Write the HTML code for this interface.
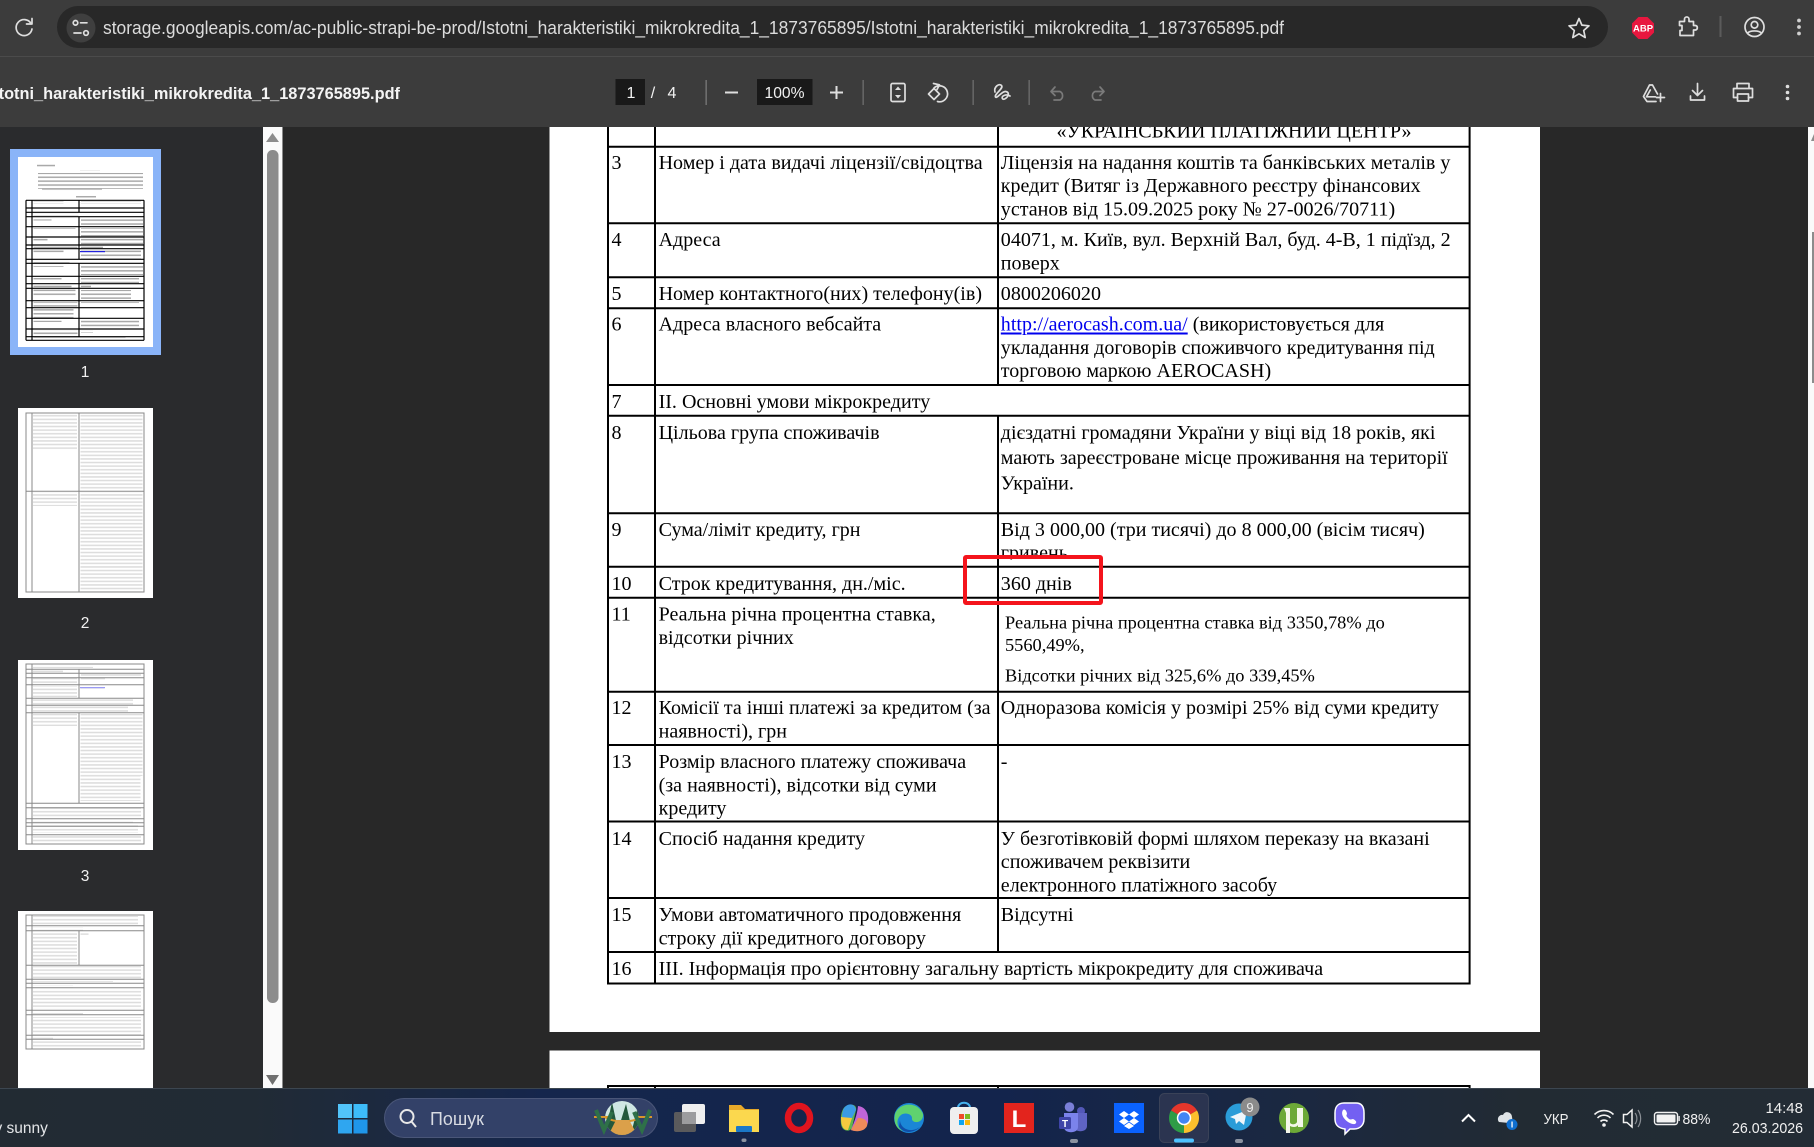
<!DOCTYPE html>
<html lang="uk"><head><meta charset="utf-8"><title>PDF</title>
<style>
html,body{margin:0;padding:0;background:#282828;overflow:hidden;width:1814px;height:1147px}
svg{display:block}
.t{font-family:"Liberation Serif","Noto Serif CJK SC",serif;font-size:20.05px;fill:#000}
.s{font-size:18.37px}
.u{font-family:"Liberation Sans","Noto Sans CJK SC",sans-serif}
.ic{fill:none;stroke:#dedede;stroke-width:1.7;stroke-linecap:round;stroke-linejoin:round}
.dim{stroke:#7a7a7a}
</style></head><body>
<svg xmlns="http://www.w3.org/2000/svg" width="1814" height="1147" viewBox="0 0 1814 1147">
<defs>
<pattern id="p1" width="10" height="3.9" patternUnits="userSpaceOnUse"><rect width="10" height="1.5" y="1" fill="#a8a8a8"/></pattern>
<pattern id="p2" width="10" height="3.6" patternUnits="userSpaceOnUse"><rect width="10" height="1.5" y="1" fill="#dcdcdc"/></pattern>
<linearGradient id="tb" x1="0" x2="1" y1="0" y2="0">
<stop offset="0" stop-color="#222b33"/><stop offset=".14" stop-color="#212b35"/><stop offset=".3" stop-color="#15264c"/><stop offset=".55" stop-color="#13244c"/><stop offset=".72" stop-color="#1b2840"/><stop offset=".84" stop-color="#222b33"/><stop offset="1" stop-color="#232c35"/></linearGradient>
<clipPath id="cp"><rect x="549" y="127" width="991" height="961"/></clipPath>
<clipPath id="cg"><rect x="990" y="540" width="300" height="19.5"/></clipPath>
<clipPath id="cl"><circle cx="622" cy="1118" r="17"/></clipPath>
</defs>

<!-- backgrounds -->
<rect width="1814" height="1147" fill="#282828"/>
<rect x="0" y="127" width="263" height="961" fill="#2a2b2d"/>

<!-- thumbnail scrollbar -->
<rect x="263" y="127" width="20" height="961" fill="#fafafa"/>
<rect x="282" y="127" width="1" height="961" fill="#8a8a8a"/>
<rect x="267" y="150" width="11.5" height="853" rx="5.5" fill="#8c8c8c"/>
<path d="M272.5 133 L279 142 H266 Z" fill="#8c8c8c"/>
<path d="M272.5 1085 L279 1075 H266 Z" fill="#707070"/>

<!-- thumbnails -->
<rect x="10" y="149" width="151" height="206" fill="#8ab4f8"/>
<rect x="18" y="157" width="135" height="190" fill="#fff"/>
<g fill="url(#p1)">
<rect x="37" y="164" width="18" height="3"/>
<rect x="80" y="170" width="20" height="2.6"/>
<rect x="38" y="173" width="105" height="16"/>
<rect x="42" y="187" width="60" height="5"/>
<rect x="76" y="195" width="20" height="2.6"/>
<rect x="33.500" y="201" width="30" height="3"/><rect x="81" y="201" width="60" height="3"/>
<rect x="33.500" y="213" width="45" height="2.800"/>
<rect x="33.500" y="217.500" width="18" height="3"/><rect x="81" y="217.500" width="62" height="9"/>
<rect x="33.500" y="228" width="42" height="3"/><rect x="81" y="228" width="62" height="9"/>
<rect x="33.500" y="238" width="14" height="3"/><rect x="81" y="238" width="62" height="7"/>
<rect x="33.500" y="245.500" width="44" height="3"/><rect x="81" y="245.500" width="22" height="3"/>
<rect x="33.500" y="250" width="30" height="3"/><rect x="81" y="250" width="60" height="9"/>
<rect x="33.500" y="260" width="36" height="3"/>
<rect x="33.500" y="264" width="30" height="3"/><rect x="81" y="264" width="62" height="11"/>
<rect x="33.500" y="278" width="28" height="3"/><rect x="81" y="278" width="58" height="5"/>
<rect x="33.500" y="285" width="38" height="3"/><rect x="81" y="285" width="10" height="3"/>
<rect x="33.500" y="289" width="42" height="7"/><rect x="81" y="290" width="50" height="9"/>
<rect x="33.500" y="302" width="44" height="5"/><rect x="81" y="302" width="58" height="3"/>
<rect x="33.500" y="309" width="40" height="9"/>
<rect x="33.500" y="319" width="28" height="3"/><rect x="81" y="319" width="58" height="9"/>
<rect x="33.500" y="330" width="44" height="6"/><rect x="81" y="330" width="12" height="3"/>
<rect x="33.500" y="337.400" width="92" height="2.600"/>
</g>
<rect x="80" y="251" width="25" height="1.200" fill="#2222dd"/>
<path d="M26 200.300V340.300M32 200.300V340.300M144 200.300V340.300M79 200.300V212.300M79 216.700V259.300M79 263.300V336.700M26 200.300H144M26 208H144M26 212.300H144M26 216.700H144M26 226.700H144M26 237H144M26 245H144M26 248.700H144M26 259.300H144M26 263.300H144M26 276.300H144M26 283.700H144M26 288.300H144M26 300.700H144M26 307.700H144M26 318.300H144M26 329H144M26 336.700H144M26 340.300H144" stroke="#000" stroke-width="1.200" fill="none"/>
<text x="85" y="377" text-anchor="middle" class="u" font-size="15.500" fill="#f2f2f2">1</text>

<rect x="18" y="408" width="135" height="190" fill="#fff"/>
<g fill="url(#p2)">
<rect x="33" y="414" width="44" height="36"/><rect x="80.500" y="414" width="62" height="76"/>
<rect x="33" y="492" width="44" height="14"/><rect x="80.500" y="492" width="62" height="100"/>
</g>
<path d="M26 413H144V592H26ZM32 413V592M79 413V592M26 491.300H144" stroke="#888" fill="none"/>
<text x="85" y="628" text-anchor="middle" class="u" font-size="15.500" fill="#f2f2f2">2</text>

<rect x="18" y="660" width="135" height="190" fill="#fff"/>
<g fill="url(#p2)">
<rect x="33" y="665" width="60" height="3"/><rect x="33" y="670" width="30" height="2.500"/><rect x="81" y="674" width="60" height="2.500"/>
<rect x="33" y="678" width="44" height="6"/><rect x="81" y="678" width="24" height="3"/>
<rect x="33" y="686" width="44" height="11"/><rect x="80.500" y="687" width="24" height="2"/>
<rect x="33" y="699" width="100" height="6"/><rect x="33" y="706" width="95" height="6"/>
<rect x="33" y="714" width="44" height="12"/><rect x="80.500" y="714" width="62" height="62"/>
<rect x="80.500" y="776" width="60" height="25"/>
<rect x="33" y="807" width="108" height="10"/><rect x="33" y="820" width="100" height="3"/><rect x="33" y="825" width="105" height="8"/><rect x="33" y="835" width="108" height="8"/>
</g>
<path d="M26 664H144V844H26ZM32 664V844M79 669.300V698M79 712.700V803.300M26 669.300H144M26 673.300H144M26 677.700H144M26 684.700H144M26 698.300H144M26 705.300H144M26 712.700H144M26 803.300H144M26 807.700H144M26 818.700H144M26 822.700H144M26 826.300H144M26 834.700H144" stroke="#888" fill="none"/>
<rect x="80" y="687" width="25" height="1.200" fill="#9a9af5"/>
<text x="85" y="881" text-anchor="middle" class="u" font-size="15.500" fill="#f2f2f2">3</text>

<rect x="18" y="911" width="135" height="177" fill="#fff"/>
<g fill="url(#p2)">
<rect x="33" y="916" width="105" height="10"/><rect x="33" y="927.500" width="50" height="3"/>
<rect x="33" y="932" width="44" height="32"/><rect x="80.500" y="932" width="8" height="3"/>
<rect x="33" y="966" width="108" height="13"/><rect x="33" y="981" width="80" height="2.500"/><rect x="33" y="985" width="40" height="2.500"/>
<rect x="33" y="989" width="108" height="20"/><rect x="33" y="1013" width="50" height="2.500"/>
<rect x="33" y="1017" width="108" height="18"/><rect x="33" y="1037" width="20" height="2.500"/><rect x="33" y="1041" width="108" height="7"/>
</g>
<path d="M26 915H144V1049H26ZM32 915V1049M79 930.700V965.300M26 925.700H144M26 930.700H144M26 965.300H144M26 979.300H144M26 983.300H144M26 987.700H144M26 1010.300H144M26 1014.700H144M26 1035.300H144M26 1039.300H144" stroke="#888" fill="none"/>

<!-- right scrollbar -->
<rect x="1808" y="127" width="6" height="961" fill="#fafafa"/>
<rect x="1812" y="232" width="2" height="151" fill="#8c8c8c"/>
<path d="M1814 134 L1811 141 H1814Z" fill="#8c8c8c"/>

<!-- PDF page 1 -->
<rect x="549.500" y="127" width="990.500" height="905" fill="#fff"/>
<rect x="549.500" y="1050.500" width="990.500" height="40" fill="#fff"/>
<path d="M608 127V983.500M655 127V983.500M998 127V385M998 415.700V952M1469.600 127V983.500M607 146.700H1470.600M607 223.300H1470.600M607 277.300H1470.600M607 308.300H1470.600M607 385H1470.600M607 415.700H1470.600M607 513.300H1470.600M607 566.700H1470.600M607 597.700H1470.600M607 691.700H1470.600M607 745H1470.600M607 821.500H1470.600M607 898H1470.600M607 952H1470.600M607 983.500H1470.600M607 1086H1470.600M608 1086V1092M655 1086V1092M998 1086V1092M1469.600 1086V1092" stroke="#000" stroke-width="2" fill="none"/>

<g class="t" clip-path="url(#cp)">
<text class="t" x="1234" y="137.500" text-anchor="middle">«УКРАЇНСЬКИЙ ПЛАТІЖНИЙ ЦЕНТР»</text>
<text class="t" x="611.500" y="168.800">3</text><text class="t" x="658.600" y="168.800">Номер і дата видачі ліцензії/свідоцтва</text>
<text class="t" x="1000.800" y="168.800">Ліцензія на надання коштів та банківських металів у</text>
<text class="t" x="1000.800" y="192.200">кредит (Витяг із Державного реєстру фінансових</text>
<text class="t" x="1000.800" y="215.500">установ від 15.09.2025 року № 27-0026/70711)</text>
<text class="t" x="611.500" y="246.200">4</text><text class="t" x="658.600" y="246.200">Адреса</text>
<text class="t" x="1000.800" y="246.200">04071, м. Київ, вул. Верхній Вал, буд. 4-В, 1 підїзд, 2</text>
<text class="t" x="1000.800" y="269.500">поверх</text>
<text class="t" x="611.500" y="300.200">5</text><text class="t" x="658.600" y="300.200">Номер контактного(них) телефону(ів)</text>
<text class="t" x="1000.800" y="300.200">0800206020</text>
<text class="t" x="611.500" y="330.500">6</text><text class="t" x="658.600" y="330.500">Адреса власного вебсайта</text>
<text class="t" x="1000.800" y="330.500"><tspan fill="#0000ee" text-decoration="underline">http://aerocash.com.ua/</tspan> (використовується для</text>
<text class="t" x="1000.800" y="353.800">укладання договорів споживчого кредитування під</text>
<text class="t" x="1000.800" y="377.200">торговою маркою AEROCASH)</text>
<text class="t" x="611.500" y="407.800">7</text><text class="t" x="658.600" y="407.800">ІІ. Основні умови мікрокредиту</text>
<text class="t" x="611.500" y="438.800">8</text><text class="t" x="658.600" y="438.800">Цільова група споживачів</text>
<text class="t" x="1000.800" y="438.800">дієздатні громадяни України у віці від 18 років, які</text>
<text class="t" x="1000.800" y="463.800">мають зареєстроване місце проживання на території</text>
<text class="t" x="1000.800" y="489.500">України.</text>
<text class="t" x="611.500" y="536">9</text><text class="t" x="658.600" y="536">Сума/ліміт кредиту, грн</text>
<text class="t" x="1000.800" y="536">Від 3 000,00 (три тисячі) до 8 000,00 (вісім тисяч)</text>
<text class="t" x="1000.800" y="559" clip-path="url(#cg)">гривень</text>
<text class="t" x="611.500" y="590">10</text><text class="t" x="658.600" y="590">Строк кредитування, дн./міс.</text>
<text class="t" x="1000.800" y="590">360 днів</text>
<text class="t" x="611.500" y="620.500">11</text><text class="t" x="658.600" y="620.500">Реальна річна процентна ставка,</text>
<text class="t" x="658.600" y="644">відсотки річних</text>
<text class="t s" x="1005" y="628.300">Реальна річна процентна ставка від 3350,78% до</text>
<text class="t s" x="1005" y="651">5560,49%,</text>
<text class="t s" x="1005" y="681.700">Відсотки річних від 325,6% до 339,45%</text>
<text class="t" x="611.500" y="714">12</text><text class="t" x="658.600" y="714">Комісії та інші платежі за кредитом (за</text>
<text class="t" x="658.600" y="737.300">наявності), грн</text>
<text class="t" x="1000.800" y="714">Одноразова комісія у розмірі 25% від суми кредиту</text>
<text class="t" x="611.500" y="768">13</text><text class="t" x="658.600" y="768">Розмір власного платежу споживача</text>
<text class="t" x="658.600" y="791.300">(за наявності), відсотки від суми</text>
<text class="t" x="658.600" y="814.700">кредиту</text>
<text class="t" x="1000.800" y="768">-</text>
<text class="t" x="611.500" y="845">14</text><text class="t" x="658.600" y="845">Спосіб надання кредиту</text>
<text class="t" x="1000.800" y="845">У безготівковій формі шляхом переказу на вказані</text>
<text class="t" x="1000.800" y="868">споживачем реквізити</text>
<text class="t" x="1000.800" y="891.500">електронного платіжного засобу</text>
<text class="t" x="611.500" y="921">15</text><text class="t" x="658.600" y="921">Умови автоматичного продовження</text>
<text class="t" x="658.600" y="944.600">строку дії кредитного договору</text>
<text class="t" x="1000.800" y="921">Відсутні</text>
<text class="t" x="611.500" y="975">16</text><text class="t" x="658.600" y="975">ІІІ. Інформація про орієнтовну загальну вартість мікрокредиту для споживача</text>
</g>
<rect x="965" y="557" width="136" height="46" fill="none" stroke="#f4141c" stroke-width="4" rx="1"/>

<!-- browser chrome -->
<rect x="0" y="0" width="1814" height="127" fill="#3c3c3c"/>
<rect x="0" y="56" width="1814" height="1" fill="#4b4b4b"/>
<rect x="57" y="6" width="1551" height="42" rx="21" fill="#282828"/>
<circle cx="81" cy="28" r="14.500" fill="#3f3f3f"/>
<path class="ic" stroke="#c9c9c9" d="M31 23.500A8 8 0 1 0 32 29M32 18.500V24H26.500"/>
<g class="ic"><circle cx="75.500" cy="22.800" r="2.300"/><path d="M80.500 22.800H87M74 33H81"/><circle cx="86" cy="33" r="2.300"/></g>
<text x="103" y="34" class="u" font-size="18" fill="#dcdcdc" textLength="1181" lengthAdjust="spacingAndGlyphs">storage.googleapis.com/ac-public-strapi-be-prod/Istotni_harakteristiki_mikrokredita_1_1873765895/Istotni_harakteristiki_mikrokredita_1_1873765895.pdf</text>
<path class="ic" stroke-width="1.900" d="M1579 18.500L1581.900 25.100L1589 25.800L1583.700 30.500L1585.200 37.500L1579 33.800L1572.800 37.500L1574.300 30.500L1569 25.800L1576.100 25.100Z"/>
<path d="M1638.500 17H1647.500L1654 23.500V32.500L1647.500 39H1638.500L1632 32.500V23.500Z" fill="#e8173f"/>
<text x="1643" y="31.500" text-anchor="middle" class="u" font-size="9.500" font-weight="bold" fill="#fff">ABP</text>
<path class="ic" d="M1679.500 21.500H1684.500V19.200A2.200 2.200 0 0 1 1689 19.200V21.500H1693.500V25.500H1695.500A2.300 2.300 0 0 1 1695.500 30H1693.500V35.500H1680V30.500H1682V25.500H1679.500Z"/>
<rect x="1719.500" y="16" width="2" height="21" fill="#5b5b5b"/>
<g class="ic"><circle cx="1754.500" cy="27" r="9.500"/><circle cx="1754.500" cy="24.800" r="3.300"/><path d="M1747.500 33.200C1750 30.200 1759 30.200 1761.500 33.200"/></g>
<g fill="#cfcfcf"><circle cx="1799" cy="20.500" r="1.900"/><circle cx="1799" cy="27" r="1.900"/><circle cx="1799" cy="33.500" r="1.900"/></g>

<!-- pdf toolbar -->
<text x="-15" y="99" class="u" font-size="17" font-weight="bold" fill="#f4f4f4" textLength="415" lengthAdjust="spacingAndGlyphs">Istotni_harakteristiki_mikrokredita_1_1873765895.pdf</text>
<rect x="615.500" y="79" width="29.500" height="26" fill="#191919"/>
<text x="631" y="98" text-anchor="middle" class="u" font-size="16" fill="#f2f2f2">1</text>
<text x="653" y="98" text-anchor="middle" class="u" font-size="16" fill="#f2f2f2">/</text>
<text x="672" y="98" text-anchor="middle" class="u" font-size="16" fill="#f2f2f2">4</text>
<rect x="705.500" y="80" width="1.300" height="25" fill="#7a7a7a"/>
<rect x="725" y="91.500" width="13" height="2" fill="#dedede"/>
<rect x="757" y="79" width="55.500" height="26" fill="#191919"/>
<text x="784.500" y="98" text-anchor="middle" class="u" font-size="16" fill="#f2f2f2" textLength="40" lengthAdjust="spacingAndGlyphs">100%</text>
<path d="M830 92.500H843M836.500 86V99" stroke="#dedede" stroke-width="2"/>
<rect x="862.500" y="80" width="1.300" height="25" fill="#6e6e6e"/>
<g class="ic"><rect x="891" y="83.500" width="14" height="18" rx="1.500"/></g>
<path d="M898 86.500L901 90H895ZM898 98.500L901 95H895Z" fill="#dedede"/>
<g class="ic"><path d="M934 88A8 8 0 1 1 937.500 101.500M933.500 83.500L939.500 84.800L937 89.500"/><path d="M934 88.500L939.500 94L934 99.500L928.500 94Z"/></g>
<rect x="972.500" y="80" width="1.300" height="25" fill="#6e6e6e"/>
<path class="ic" d="M995 92C993.500 87 999 83 1001.500 85.500C1004 88.500 994 94 995.500 97C997 99 1002 91 1005.500 91.500C1009.500 92 1009 96 1005.500 98.500C1002.500 100.800 1000.500 97 1004 95.500C1006 94.700 1008.500 95 1010 96"/>
<rect x="1028.500" y="80" width="1.300" height="25" fill="#6e6e6e"/>
<path class="ic dim" stroke-width="2" d="M1055 87L1051 91.500L1055 95.500M1051.500 91.500H1060A4.800 4.800 0 0 1 1060 100H1054"/>
<path class="ic dim" stroke-width="2" d="M1100 87L1104 91.500L1100 95.500M1103.500 91.500H1095A4.800 4.800 0 0 0 1095 100H1101"/>
<g class="ic"><path d="M1656 101.500H1647L1643.500 96.500L1649.500 85H1652.500L1657.500 94M1650.300 90L1646.500 96.800H1655.500"/><path d="M1660.500 93.500V101.500M1656.500 97.500H1664.500"/></g>
<g class="ic"><path d="M1697.500 83.500V95M1692.500 90.500L1697.500 95.500L1702.500 90.500M1690.500 96V100H1704.500V96"/></g>
<g class="ic"><path d="M1737 88V83.500H1749V88M1737.500 97.500H1733.500V88.500H1752.500V97.500H1748.500"/><rect x="1737.500" y="94" width="11" height="7"/></g>
<g fill="#dedede"><circle cx="1787.500" cy="86.500" r="1.800"/><circle cx="1787.500" cy="92.500" r="1.800"/><circle cx="1787.500" cy="98.500" r="1.800"/></g>

<!-- taskbar -->
<rect x="0" y="1088" width="1814" height="59" fill="url(#tb)"/>
<rect x="0" y="1088" width="1814" height="1" fill="#3c4650"/>
<text x="-9" y="1133" class="u" font-size="15.500" fill="#e4e6e8">ly sunny</text>

<!-- start -->
<g fill="#3fb4f5"><rect x="338" y="1104" width="14" height="14" fill="#52c4fa"/><rect x="353.500" y="1104" width="14" height="14" fill="#3dbcfa"/><rect x="338" y="1119.500" width="14" height="14" fill="#2fa6f0"/><rect x="353.500" y="1119.500" width="14" height="14" fill="#1f96ea"/></g>
<!-- search -->
<rect x="384.500" y="1098.500" width="273" height="39" rx="19.500" fill="#334168" stroke="#4a5678"/>
<g fill="none" stroke="#e8e8e8" stroke-width="2"><circle cx="407" cy="1116.500" r="6.500"/><path d="M411.500 1121.500L416 1127"/></g>
<text x="430" y="1125" class="u" font-size="18" fill="#d8dbe2" textLength="54" lengthAdjust="spacingAndGlyphs">Пошук</text>
<!-- search landscape -->
<circle cx="622" cy="1118" r="17" fill="#cfe7e3"/>
<g clip-path="url(#cl)">
<path d="M596 1136L600 1108L606 1130L612 1102L618 1130L626 1104L632 1130L638 1106L644 1130L650 1108L656 1136Z" fill="#23583c"/>
<path d="M600 1114C612 1124 634 1124 646 1114" fill="none" stroke="#d9962c" stroke-width="2"/>
<path d="M616 1120H629L638 1136H608Z" fill="#dba04a"/>
</g>
<path d="M594 1117H610M636 1117H652" stroke="#d9962c" stroke-width="2"/><path d="M596 1110L604 1130L612 1112M634 1112L642 1130L650 1110" fill="none" stroke="#2e7048" stroke-width="4"/>

<!-- task view -->
<rect x="674" y="1112" width="22" height="20" rx="2" fill="#5a5a5c"/>
<rect x="682" y="1104" width="23" height="20" rx="2" fill="#efefef"/>
<rect x="682" y="1112" width="14" height="12" fill="#9c9c9e"/>
<!-- explorer -->
<path d="M729 1105H741L745 1109H759V1132H729Z" fill="#e7a92a"/><rect x="729" y="1110" width="30" height="22" fill="#fbd84e"/><rect x="736" y="1126" width="16" height="6" rx="1" fill="#1a78c8"/>
<rect x="741.500" y="1138.500" width="5" height="3.500" rx="1.700" fill="#8b92a0"/>
<!-- opera -->
<ellipse cx="799" cy="1118" rx="11" ry="12" fill="none" stroke="#e0141e" stroke-width="6.500"/>
<!-- copilot -->
<path d="M846 1106C852 1103 857 1105 856 1110L852 1128C850 1132 842 1132 841 1124C840 1116 842 1108 846 1106Z" fill="#5fb64d"/>
<path d="M846 1106C850 1103 855 1104 856 1110L852 1118L842 1120C842 1112 843 1108 846 1106Z" fill="#3a9be6"/>
<path d="M858 1106C866 1107 869 1114 868 1122C866 1132 856 1132 851 1130C854 1122 857 1116 858 1106Z" fill="#c165d8"/>
<path d="M858 1118C866 1118 868 1122 867 1126C864 1132 856 1132 851 1130Z" fill="#ee8a5a"/>
<path d="M841 1117L852 1118L848 1130C843 1130 841 1126 841 1117Z" fill="#f5c93f"/>
<!-- edge -->
<circle cx="909" cy="1118" r="15" fill="#1b86d6"/>
<path d="M895 1114C899 1102 918 1101 923 1114C924 1124 911 1124 912 1118C912 1114 905 1112 901 1115C896 1119 896 1127 903 1131C898 1130 893 1124 895 1114Z" fill="#5fd26f"/>
<path d="M900 1120C900 1128 910 1134 920 1127C915 1132 905 1135 899 1127Z" fill="#0f4fa8"/>
<!-- store -->
<path d="M958 1108C958 1101 970 1101 970 1108" fill="none" stroke="#45b2ef" stroke-width="2"/>
<rect x="950" y="1107" width="28" height="27" rx="4" fill="#efefef"/>
<rect x="959" y="1114" width="5" height="5" fill="#ef4b2a"/><rect x="965" y="1114" width="5" height="5" fill="#7dbb22"/><rect x="959" y="1120" width="5" height="5" fill="#11a5ef"/><rect x="965" y="1120" width="5" height="5" fill="#fcb80b"/>
<!-- L -->
<rect x="1004" y="1103" width="30" height="30" fill="#e3241d"/>
<text x="1019" y="1127" text-anchor="middle" class="u" font-size="24" font-weight="bold" fill="#fff">L</text>
<!-- teams -->
<circle cx="1069.500" cy="1107" r="4.800" fill="#7a7fd8"/><circle cx="1081" cy="1111" r="4" fill="#5358b8"/>
<path d="M1073 1113H1087V1126C1087 1133 1074 1133 1073 1126Z" fill="#5f64c4"/><path d="M1064 1113H1078V1127C1078 1134 1064 1134 1064 1127Z" fill="#7b83eb"/>
<rect x="1059" y="1117" width="12" height="12" rx="1.500" fill="#3f45a8"/>
<text x="1065" y="1127" text-anchor="middle" class="u" font-size="10" font-weight="bold" fill="#fff">T</text>
<rect x="1070" y="1139" width="8" height="4" rx="2" fill="#8b92a0"/>
<!-- dropbox -->
<rect x="1114" y="1103" width="30" height="30" fill="#0a62fe"/>
<path d="M1124 1111L1129 1114.500L1124 1118L1119 1114.500ZM1134 1111L1139 1114.500L1134 1118L1129 1114.500ZM1124 1118L1129 1121.500L1124 1125L1119 1121.500ZM1134 1118L1139 1121.500L1134 1125L1129 1121.500ZM1129 1122.500L1134 1126L1129 1129L1124 1126Z" fill="#fff"/>
<!-- chrome -->
<rect x="1159.500" y="1093.500" width="49" height="49" rx="5" fill="#2b3450" stroke="#3a4258"/>
<path d="M1184 1118L1171 1110.500A15 15 0 0 1 1197 1110.500Z" fill="#e5362b"/>
<path d="M1184 1118L1197 1110.500A15 15 0 0 1 1184 1133Z" fill="#fbc02d"/>
<path d="M1184 1118L1184 1133A15 15 0 0 1 1171 1110.500Z" fill="#2e9c46"/>
<circle cx="1184" cy="1118" r="7.200" fill="#fff"/><circle cx="1184" cy="1118" r="5.700" fill="#4285f4"/>
<rect x="1174" y="1138.500" width="20" height="4" rx="2" fill="#4cc2ff"/>
<!-- telegram -->
<circle cx="1239" cy="1117" r="13.500" fill="#2a9cd8"/>
<path d="M1230 1117L1247 1110L1244 1125L1239 1121L1236 1124L1235 1119Z" fill="#eef6fb"/>
<circle cx="1250" cy="1107" r="9.500" fill="#8b8b8b"/>
<text x="1250" y="1112" text-anchor="middle" class="u" font-size="13" fill="#eee">9</text>
<rect x="1235" y="1139" width="8" height="4" rx="2" fill="#8b92a0"/>
<!-- utorrent -->
<circle cx="1294" cy="1118" r="15" fill="#6da937"/>
<path d="M1284 1108H1290V1122C1290 1125 1296 1125 1297 1122V1108H1303V1127H1298V1125C1296 1128 1292 1127 1290 1126V1133H1286V1113Z" fill="#f4f7ea"/>
<!-- viber -->
<path d="M1344 1103H1356C1362 1103 1364 1107 1364 1113V1119C1364 1125 1360 1129 1354 1129H1350L1345 1134V1129C1338 1128 1335 1125 1335 1119V1113C1335 1107 1338 1103 1344 1103Z" fill="#7360f2" stroke="#fff" stroke-width="1.500"/>
<path d="M1343 1110C1345 1108 1347 1112 1347 1114C1346 1116 1346 1116 1349 1119C1351 1120 1352 1119 1353 1119C1355 1120 1358 1122 1355 1124C1349 1125 1339 1116 1343 1110Z" fill="#fff"/>
<!-- tray -->
<path d="M1462 1121.500L1468.500 1115L1475 1121.500" fill="none" stroke="#fff" stroke-width="2"/>
<path d="M1499 1122C1496 1118 1500 1114 1503 1115C1505 1110 1512 1112 1512 1117C1513 1120 1511 1123 1509 1123Z" fill="#dfe3e6"/>
<circle cx="1512" cy="1124.500" r="5.500" fill="#0f6fd0"/><rect x="1511.400" y="1121.500" width="1.300" height="6" fill="#fff"/>
<text x="1556" y="1124" text-anchor="middle" class="u" font-size="15" fill="#f0f0f0" textLength="25" lengthAdjust="spacingAndGlyphs">УКР</text>
<g fill="none" stroke="#f2f2f2" stroke-width="1.600"><path d="M1594.500 1114.500A13.500 13.500 0 0 1 1613.500 1114.500"/><path d="M1597.500 1118A9 9 0 0 1 1610.500 1118"/><path d="M1600.500 1121.500A5 5 0 0 1 1607.500 1121.500"/></g><circle cx="1604" cy="1125" r="1.800" fill="#f2f2f2"/>
<path d="M1623.500 1114.500H1627L1632 1110V1127L1627 1122.500H1623.500Z" fill="none" stroke="#f2f2f2" stroke-width="1.500"/>
<path d="M1635 1113C1637.500 1116 1637.500 1121 1635 1124M1638 1110C1641.500 1115 1641.500 1122 1638 1127" fill="none" stroke="#8a8f95" stroke-width="1.200"/>
<rect x="1654.500" y="1112.500" width="23" height="12" rx="2.500" fill="none" stroke="#f2f2f2" stroke-width="1.400"/>
<rect x="1656.500" y="1114.500" width="19" height="8" rx="1" fill="#f2f2f2"/><rect x="1678.500" y="1116" width="1.300" height="5" fill="#f2f2f2"/>
<text x="1696.500" y="1124" text-anchor="middle" class="u" font-size="15" fill="#f0f0f0" textLength="28" lengthAdjust="spacingAndGlyphs">88%</text>
<text x="1803" y="1113" text-anchor="end" class="u" font-size="15" fill="#f0f0f0">14:48</text>
<text x="1732" y="1133" class="u" font-size="15" fill="#f0f0f0" textLength="71" lengthAdjust="spacingAndGlyphs">26.03.2026</text>
</svg>
</body></html>
